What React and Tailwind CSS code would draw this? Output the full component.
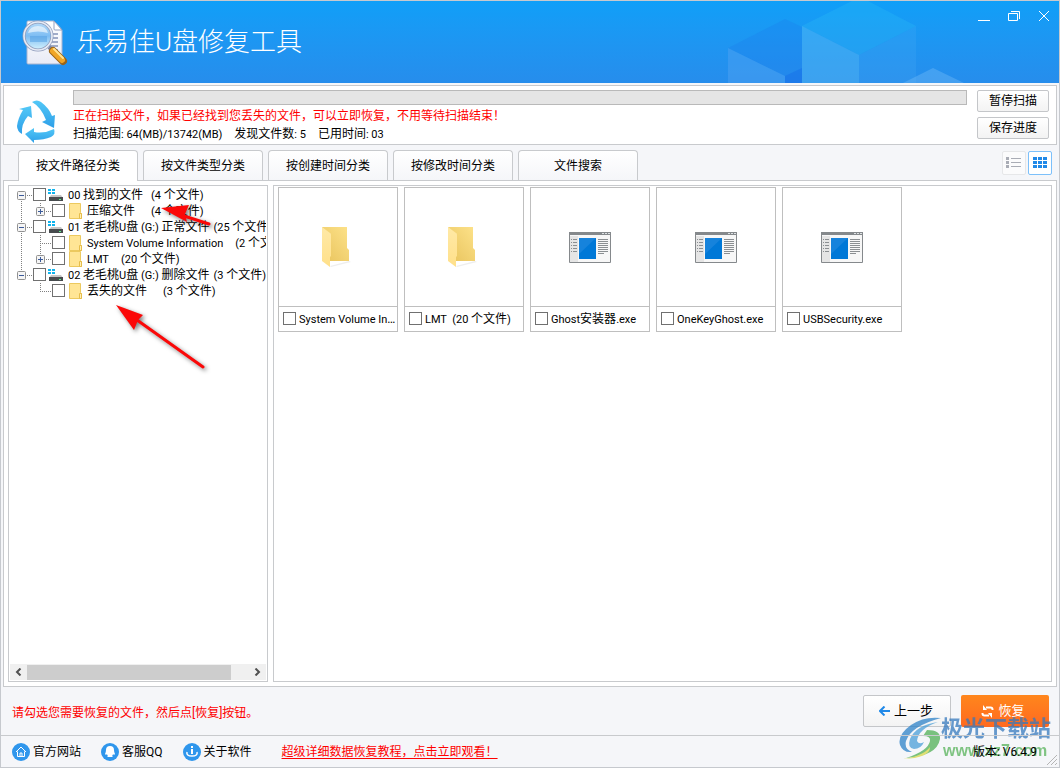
import React, { useState } from "react";
import clsx from "clsx";

const TABS = ["按文件路径分类", "按文件类型分类", "按创建时间分类", "按修改时间分类", "文件搜索"];

const TREE = [
  { id: "found", level: 0, expander: "-", icon: "drive", name: "00 找到的文件", count: "(4 个文件)", gap: "pl-2", down: true },
  { id: "zip", level: 1, expander: "+", icon: "folder", name: "压缩文件", count: "(4 个文件)", gap: "pl-4", trunk: true, up: true },
  { id: "normal", level: 0, expander: "-", icon: "drive", name: "01 老毛桃U盘 (G:) 正常文件", count: "(25 个文件)", gap: "pl-1", up: true, down: true },
  { id: "svi", level: 1, icon: "folder", name: "System Volume Information", count: "(2 个文件)", gap: "pl-3", trunk: true, up: true, down: true },
  { id: "lmt", level: 1, expander: "+", icon: "folder", name: "LMT", count: "(20 个文件)", gap: "pl-3", trunk: true, up: true },
  { id: "deleted", level: 0, expander: "-", icon: "drive", name: "02 老毛桃U盘 (G:) 删除文件", count: "(3 个文件)", gap: "pl-1", up: true },
  { id: "lost", level: 1, icon: "folder", name: "丢失的文件", count: "(3 个文件)", gap: "pl-4", up: true },
];

const FILES = [
  { name: "System Volume Information", type: "folder" },
  { name: "LMT  (20 个文件)", type: "folder" },
  { name: "Ghost安装器.exe", type: "exe" },
  { name: "OneKeyGhost.exe", type: "exe" },
  { name: "USBSecurity.exe", type: "exe" },
];

// Latin runs are set one size smaller than the Chinese text around them
const Mixed = ({ text }) =>
  text.split(/([\x20-\x7e]+)/).map((part, i) =>
    i % 2 === 1 ? (
      <span key={i} className="text-[11px]">
        {part}
      </span>
    ) : (
      part
    )
  );

const CheckBox = ({ id }) => (
  <input
    id={id}
    type="checkbox"
    className="mb-px h-[13px] w-[13px] shrink-0 appearance-none border border-[#707070] bg-white checked:bg-[#1e88e5]"
  />
);

const AppLogo = () => (
  <svg width="48" height="48" viewBox="0 0 48 48" aria-hidden="true">
    <defs>
      <linearGradient id="lens" x1="0" y1="0" x2="0" y2="1">
        <stop offset="0" stopColor="#b9dcf8" />
        <stop offset="0.5" stopColor="#7dbdf3" />
        <stop offset="1" stopColor="#d6f3fd" />
      </linearGradient>
      <linearGradient id="page" x1="0" y1="0" x2="0" y2="1">
        <stop offset="0" stopColor="#ffffff" />
        <stop offset="1" stopColor="#e9ebf6" />
      </linearGradient>
    </defs>
    <path d="M7 3h26l8 9v33q0 1-1 1H7q-1 0-1-1V4q0-1 1-1z" fill="url(#page)" stroke="#a9b4cf" />
    <path d="M33 3v8q0 1 1 1h7z" fill="#fff" stroke="#93a0c0" />
    <path d="M28 16h9M30 20h7M30 24h7M28 28h9M31 32h6" stroke="#8492b8" strokeWidth="1.5" />
    <circle cx="17" cy="18" r="14" fill="url(#lens)" stroke="#8f9bbb" strokeWidth="3" />
    <circle cx="17" cy="18" r="14" fill="none" stroke="#e6ebf5" strokeWidth="1.6" />
    <path d="M9 18h17v6H9z" fill="#4f9de2" opacity="0.5" />
    <path d="M7 15q2-7 10-7t10 7q-10-3-20 0z" fill="#fff" opacity="0.6" />
    <path d="M28 29l4 4" stroke="#7d86a3" strokeWidth="4" />
    <path d="M32 33l10 10" stroke="#9a6418" strokeWidth="8" strokeLinecap="round" />
    <path d="M32 33l9 9" stroke="#f0a526" strokeWidth="6" strokeLinecap="round" />
    <path d="M33 31l9 9" stroke="#ffe392" strokeWidth="2" strokeLinecap="round" />
  </svg>
);

const HeaderCubes = () => (
  <svg width="331" height="82" viewBox="0 0 331 82" className="h-full" aria-hidden="true">
    <path d="M0 47l57-29 17 8v56H0z" fill="#1c78ea" opacity="0.25" />
    <path d="M0 47l57 28v7H0z" fill="#63b4f5" opacity="0.35" />
    <path d="M57 75l17-8v15H57z" fill="#1568e8" opacity="0.4" />
    <path d="M74 25l50-25h16l48 25-57 29z" fill="#2cbdf4" opacity="0.3" />
    <path d="M74 25l57 29v28H74z" fill="#5ec0f6" opacity="0.4" />
    <path d="M131 54l57-29v57h-57z" fill="#4fb0f5" opacity="0.2" />
    <path d="M175 82l30-15 31 15z" fill="#72bcf7" opacity="0.4" />
  </svg>
);

const RecycleIcon = () => (
  <svg width="42" height="44" viewBox="0 0 42 44" aria-hidden="true">
    <defs>
      <linearGradient id="recycle" x1="0" y1="0" x2="0" y2="1">
        <stop offset="0" stopColor="#53c8f7" />
        <stop offset="1" stopColor="#2e9fe8" />
      </linearGradient>
    </defs>
    <g fill="url(#recycle)">
      <path d="M16 2q5-3 9 0 8 6 11 14l3-1-1 13-12-6 4-2Q25 7 16 2z" />
      <path d="M15 6l1 12-4-2Q5 24 6 34q-5-3-5-8 1-8 6-16L3 9z" />
      <path d="M9 34l9-6v4q10 2 20-3 2 5-3 8-7 3-17 3v3z" />
    </g>
  </svg>
);

const DriveIcon = () => (
  <svg width="16" height="14" viewBox="0 0 16 14" className="shrink-0" aria-hidden="true">
    <path d="M0 1h3v2H0zM4 1h3v2H4zM0 4h3v2H0zM4 4h3v2H4z" fill="#10b4ee" />
    <path d="M3 7h10l2 3H1z" fill="#c5c5c5" />
    <path d="M1 9h14v4H1z" fill="#474b4e" />
    <path d="M11 11h2v1h-2z" fill="#5bf08b" />
  </svg>
);

const SmallFolder = () => (
  <svg width="14" height="16" viewBox="0 0 14 16" className="shrink-0" aria-hidden="true">
    <path d="M0.5 0.5h11v9l1 1v5H0.5z" fill="#ffe595" stroke="#ecc95f" />
    <path d="M10.5 10.5h2v5h-2z" fill="#fff0b8" stroke="#e6bd4b" />
  </svg>
);

const BigFolder = () => (
  <svg width="34" height="42" viewBox="0 0 34 42" aria-hidden="true">
    <defs>
      <linearGradient id="folderBack" x1="0" y1="1" x2="1" y2="0">
        <stop offset="0" stopColor="#e8c35c" />
        <stop offset="1" stopColor="#fde28a" />
      </linearGradient>
      <linearGradient id="folderFront" x1="0" y1="0" x2="0" y2="1">
        <stop offset="0" stopColor="#ffe9a6" />
        <stop offset="1" stopColor="#ffe08a" />
      </linearGradient>
    </defs>
    <path d="M9 40l19-5 2 1-20 5z" fill="#eee" />
    <path d="M1 1h25v21l2 2v11H9z" fill="url(#folderBack)" />
    <path d="M1 1l8 6q1 0 1 2v21l-1 1v10l-8-6z" fill="url(#folderFront)" />
  </svg>
);

const ExeIcon = () => (
  <svg width="42" height="31" viewBox="0 0 42 31" aria-hidden="true">
    <path d="M0.5 0.5h41v30H0.5z" fill="#f7f7f7" stroke="#85898c" />
    <path d="M0 0h42v3H0z" fill="#85898c" />
    <path d="M33 1h2v1h-2zM36 1h2v1h-2zM39 1h2v1h-2z" fill="#dfe3e5" />
    <path d="M1 4h8v26H1z" fill="#e5e5e5" />
    <path d="M2 7.5h1M4 7.5h4M2 10.5h1M4 10.5h4M2 13.5h1M4 13.5h4M2 16.5h1M4 16.5h4M2 19.5h1M4 19.5h4" stroke="#8b8f92" />
    <path d="M10 6h17v21H10z" fill="#0078d7" />
    <path d="M10 6h17L10 22z" fill="#1683dc" />
    <path d="M29 7.5h10M29 9.5h10M29 11.5h10M29 13.5h10M29 15.5h10M29 17.5h10M29 19.5h10M29 21.5h6" stroke="#8b8f92" />
  </svg>
);

// Dotted connector lines and the +/- box at the left of a tree row
const TreeGutter = ({ node }) => {
  const x = node.level === 0 ? 12 : 31;
  const width = node.level === 0 ? 24 : 43;
  return (
    <svg width={width} height="16" viewBox={`0 0 ${width} 16`} className="shrink-0" aria-hidden="true">
      <g stroke="#808080" strokeDasharray="1 1" fill="none">
        {node.trunk && <path d="M12.5 0v16" />}
        {node.up && <path d={`M${x + 0.5} 0v8`} />}
        {node.down && <path d={`M${x + 0.5} 8v8`} />}
        <path d={`M${x} 8.5H${width}`} />
      </g>
      {node.expander && (
        <>
          <rect x={x - 3.5} y="4.5" width="8" height="8" rx="1" fill="#f5f5f5" stroke="#919191" />
          <path d={`M${x - 2} 8.5h5`} stroke="#3b5a9a" />
          {node.expander === "+" && <path d={`M${x + 0.5} 6v5`} stroke="#3b5a9a" />}
        </>
      )}
    </svg>
  );
};

const TreeRow = ({ node }) => (
  <li className="flex h-4 items-center">
    <TreeGutter node={node} />
    <CheckBox id={node.id} />
    <label
      htmlFor={node.id}
      className={clsx("flex h-4 items-center whitespace-pre", node.level === 0 ? "pl-0.5" : "pl-1")}
    >
      {node.icon === "drive" ? <DriveIcon /> : <SmallFolder />}
      <span className="pl-1">
        <Mixed text={node.name} />
      </span>
      <span className={node.gap}>
        <Mixed text={node.count} />
      </span>
    </label>
  </li>
);

const FileCard = ({ file, index }) => (
  <li className="w-[120px] border border-[#bfbfbf] bg-white">
    <div className="flex h-[118px] items-center justify-center">
      {file.type === "folder" ? <BigFolder /> : <ExeIcon />}
    </div>
    <div className="flex h-[25px] items-center gap-[3px] border-t border-[#bfbfbf] pl-1">
      <CheckBox id={`file-${index}`} />
      <label htmlFor={`file-${index}`} className="truncate whitespace-pre pr-px">
        <Mixed text={file.name} />
      </label>
    </div>
  </li>
);

const RoundIcon = ({ children }) => (
  <svg width="18" height="18" viewBox="0 0 18 18" aria-hidden="true">
    <circle cx="9" cy="9" r="9" fill="#2f96ec" />
    {children}
  </svg>
);

const Annotations = () => (
  <svg
    width="230"
    height="380"
    viewBox="0 0 230 380"
    className="pointer-events-none absolute left-0 top-0 drop-shadow-[2px_2px_2px_rgba(0,0,0,0.5)]"
    aria-hidden="true"
  >
    <path d="M180 214l28 9M136 319l66 47" stroke="#fb0808" strokeWidth="3" strokeLinecap="round" />
    <path d="M160 207l28-3-4 9 2 8z" fill="#fb0808" />
    <path d="M115 304l27 10-5 5-4 10z" fill="#fb0808" />
  </svg>
);

const Watermark = () => (
  <div className="pointer-events-none absolute bottom-1.5 right-2 flex items-center opacity-75" aria-hidden="true">
    <svg width="42" height="44" viewBox="0 0 42 44">
      <path d="M42 1Q25-1 12 8-2 18 1 28q3 8 12 7-8-3-6-11Q12 9 42 1z" fill="#2d82c8" />
      <path d="M39 5Q17 8 11 22q-3 9 4 10 7 0 10-7-5 3-7-1Q19 12 39 5z" fill="#4b9fd8" />
      <path d="M28 13q14 0 13 9-3 17-34 19 22-7 24-17 1-5-7-5z" fill="#50b055" />
      <path d="M4 42q20-3 27-12 0 11-27 12z" fill="#d9d848" />
    </svg>
    <div className="flex flex-col">
      <span className="text-[22px] font-bold leading-6 text-[#3679bd]">极光下载站</span>
      <span className="pl-0.5 font-[Liberation_Sans] text-[16px] font-bold leading-5 text-[#58b35b]">www.xz7.com</span>
    </div>
  </div>
);

const plainButton =
  "rounded-xs border border-[#c4c6c9] bg-gradient-to-b from-white to-[#f3f3f3] hover:border-[#7fbdf5]";

export default function App() {
  const [activeTab, setActiveTab] = useState(0);

  return (
    <div className="relative flex min-h-screen flex-col overflow-hidden border border-[#c6c9ce] bg-[#f5f6f9] font-[Roboto,'Noto_Sans_CJK_SC',sans-serif] text-[12px] leading-4 text-black">
      {/* Title bar */}
      <header className="flex h-[82px] shrink-0 items-center justify-between bg-gradient-to-b from-[#0f9ff8] to-[#268dec]">
        <div className="flex items-center gap-2 pl-5">
          <AppLogo />
          <h1 className="text-[26px] font-light leading-8 text-white">乐易佳U盘修复工具</h1>
        </div>
        <div className="relative h-full">
          <HeaderCubes />
          <div className="absolute right-[7px] top-[7px] flex gap-3.5 text-white">
            <button aria-label="最小化" className="p-0.5">
              <svg width="12" height="12" viewBox="0 0 12 12"><path d="M0 10.5h12" stroke="currentColor" /></svg>
            </button>
            <button aria-label="还原" className="p-0.5">
              <svg width="12" height="12" viewBox="0 0 12 12" fill="none" stroke="currentColor">
                <path d="M0.5 3.5h9v7h-9zM3 1.5h8.5V9" />
              </svg>
            </button>
            <button aria-label="关闭" className="p-0.5">
              <svg width="12" height="12" viewBox="0 0 12 12"><path d="M1 1l10 10M11 1L1 11" stroke="currentColor" /></svg>
            </button>
          </div>
        </div>
      </header>

      {/* Scan progress */}
      <section className="mx-0.5 mt-0.5 flex border border-[#c8cacd] bg-white pl-3 pr-[7px] pt-1">
        <div className="flex w-[57px] shrink-0 items-end">
          <RecycleIcon />
        </div>
        <div className="flex-1">
          <div role="progressbar" aria-label="扫描进度" className="h-[15px] border border-[#b9b9b9] bg-[#e5e5e5]" />
          <p className="mt-0.5 leading-[18px] text-[#f00]">
            正在扫描文件，如果已经找到您丢失的文件，可以立即恢复，不用等待扫描结束！
          </p>
          <p className="flex gap-3 leading-[18px]">
            <span><Mixed text="扫描范围: 64(MB)/13742(MB)" /></span>
            <span><Mixed text="发现文件数: 5" /></span>
            <span><Mixed text="已用时间: 03" /></span>
          </p>
        </div>
        <div className="ml-2.5 flex w-[72px] flex-col gap-[5px]">
          <button className={clsx(plainButton, "h-[22px]")}>暂停扫描</button>
          <button className={clsx(plainButton, "h-[22px]")}>保存进度</button>
        </div>
      </section>

      {/* Tabs */}
      <div className="mx-0.5 flex items-end justify-between pl-[15px] pr-[5px] pt-[5px]">
        <div role="tablist" className="flex gap-[5px]">
          {TABS.map((tab, i) => (
            <button
              key={tab}
              role="tab"
              aria-selected={i === activeTab}
              onClick={() => setActiveTab(i)}
              className={clsx(
                "w-[120px] rounded-t-sm border border-b-0 border-[#c8cacd] bg-gradient-to-b from-white",
                i === activeTab ? "z-10 -mb-px h-[31px] to-white pb-px" : "h-[30px] to-[#f5f6f9]"
              )}
            >
              {tab}
            </button>
          ))}
        </div>
        <div className="flex gap-0.5 self-start pt-px">
          <button aria-label="列表" className="flex h-6 w-6 items-center justify-center rounded-xs border border-[#e6e7e9] bg-[#fbfbfc]">
            <svg width="16" height="12" viewBox="0 0 16 12" fill="#a9acb5">
              <path d="M0 0h3v3H0zM5 1h10v1H5zM0 4h3v3H0zM5 5h10v1H5zM0 8h3v3H0zM5 9h10v1H5z" />
            </svg>
          </button>
          <button aria-label="缩略图" className="flex h-6 w-6 items-center justify-center rounded-xs border border-[#7cc0fa] bg-white">
            <svg width="14" height="12" viewBox="0 0 14 12" fill="#2089e8">
              <path d="M0 0h4v3H0zM5 0h4v3H5zM10 0h4v3h-4zM0 4h4v3H0zM5 4h4v3H5zM10 4h4v3h-4zM0 8h4v3H0zM5 8h4v3H5zM10 8h4v3h-4z" />
            </svg>
          </button>
        </div>
      </div>

      {/* Tree and thumbnails */}
      <main className="mx-0.5 flex flex-1 gap-[5px] border border-[#c8cacd] bg-white p-1">
        <div className="flex w-[260px] shrink-0 flex-col justify-between border border-[#c8cacd] p-px">
          <ul className="-ml-px overflow-hidden">
            {TREE.map((node) => (
              <TreeRow key={node.id} node={node} />
            ))}
          </ul>
          <div className="flex h-4 items-center bg-[#f0f0f0]">
            <button aria-label="向左滚动" className="flex w-[17px] justify-center">
              <svg width="7" height="8" viewBox="0 0 7 8"><path d="M5.5 0.5L2 4l3.5 3.5" fill="none" stroke="#505050" strokeWidth="2" /></svg>
            </button>
            <div className="h-[15px] w-[204px] bg-[#cdcdcd]" />
            <button aria-label="向右滚动" className="ml-auto flex w-[17px] justify-center">
              <svg width="7" height="8" viewBox="0 0 7 8"><path d="M1.5 0.5L5 4 1.5 7.5" fill="none" stroke="#505050" strokeWidth="2" /></svg>
            </button>
          </div>
        </div>
        <div className="flex-1 border border-[#c8cacd] px-1 pt-px">
          <ul className="flex flex-wrap gap-1.5">
            {FILES.map((file, i) => (
              <FileCard key={file.name} file={file} index={i} />
            ))}
          </ul>
        </div>
      </main>

      {/* Actions */}
      <div className="flex h-12 shrink-0 items-center justify-between pl-[11px] pr-2.5">
        <p className="pt-1 text-[#f00]">
          请勾选您需要恢复的文件，然后点[恢复]按钮。
        </p>
        <div className="flex gap-2.5 text-[13px]">
          <button className={clsx(plainButton, "flex h-8 w-[88px] items-center justify-center gap-1 pr-0.5")}>
            <svg width="11" height="10" viewBox="0 0 11 10" fill="none" stroke="#2089e8" strokeWidth="2">
              <path d="M11 5H2M5.5 0.5L1 5l4.5 4.5" />
            </svg>
            上一步
          </button>
          <button className="flex h-8 w-[88px] items-center justify-center gap-1 rounded-xs bg-gradient-to-b from-[#ff861c] to-[#ff6920] pr-1 text-white">
            <svg width="13" height="13" viewBox="0 0 13 13" fill="none" stroke="currentColor" strokeWidth="2">
              <path d="M11.500 5V4.500q0-2-2-2H5M1.500 8v0.500q0 2 2 2H8" />
              <path d="M2 0v5h4zM11 13V8H7z" fill="currentColor" stroke="none" />
            </svg>
            恢复
          </button>
        </div>
      </div>

      <Watermark />

      {/* Status bar */}
      <footer className="relative flex h-8 shrink-0 items-center border-t border-[#c8cacd] pl-[11px] pr-[22px]">
        <nav className="flex items-center gap-5">
          <a href="#site" className="flex items-center gap-[3px]">
            <RoundIcon>
              <path d="M4 9l5-5 5 5M5.500 8.500v5h7v-5M8 13v-3h2v3" fill="none" stroke="#fff" />
            </RoundIcon>
            官方网站
          </a>
          <a href="#qq" className="flex items-center gap-[3px]">
            <RoundIcon>
              <path d="M9 3q4 0 4 4 0 2 1 4l-1 1-1-1q0 1-1 2l1 1H6l1-1q-1-1-1-2l-1 1-1-1q1-2 1-4 0-4 4-4z" fill="#fff" />
            </RoundIcon>
            客服QQ
          </a>
          <a href="#about" className="flex items-center gap-[3px]">
            <RoundIcon>
              <path d="M8 3h2v2H8zM8 6h2v5H8z" fill="#fff" />
              <path d="M4 9q-1 4 5 4t5-4" fill="none" stroke="#fff" strokeWidth="1.5" />
            </RoundIcon>
            关于软件
          </a>
        </nav>
        <a href="#tutorial" className="ml-[30px] text-[#f00] underline underline-offset-2">
          超级详细数据恢复教程，点击立即观看！
        </a>
        <span className="ml-auto">版本: V6.4.9</span>
        <svg width="10" height="10" viewBox="0 0 10 10" className="absolute bottom-0.5 right-0.5" aria-hidden="true">
          <path d="M0 10L10 0M4 10l6-6M8 10l2-2" stroke="#b5b5b5" />
        </svg>
      </footer>

      <Annotations />
    </div>
  );
}
